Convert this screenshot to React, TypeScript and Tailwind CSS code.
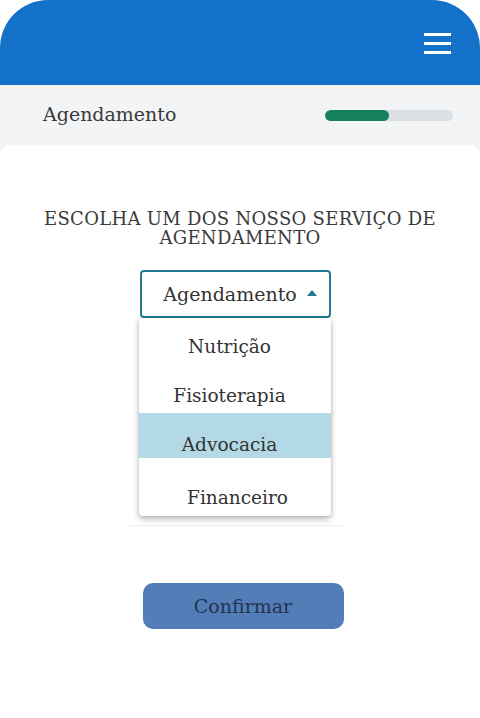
import React from "react";

const serif = { fontFamily: '"DejaVu Serif", "Liberation Serif", serif' };

export default function App() {
  return (
    <div className="w-[480px] h-[718px] bg-white overflow-hidden" style={serif}>
      <header className="h-[85px] bg-[#1471c9] rounded-t-[48px] flex items-center justify-end pr-[29px]">
        <div className="flex flex-col gap-[6px] pt-[1px]">
          <span className="block w-[27px] h-[3px] bg-white" />
          <span className="block w-[27px] h-[3px] bg-white" />
          <span className="block w-[27px] h-[3px] bg-white" />
        </div>
      </header>
      <div className="bg-[#f2f4f6]">
        <div className="h-[60px] flex items-center justify-between pl-[43px] pr-[27px]">
          <span className="text-[19px] text-[#3a3a3a] leading-none pb-[1px]">Agendamento</span>
          <div className="w-[128px] h-[11px] rounded-full bg-[#dadfe3] overflow-hidden">
            <div className="w-[64px] h-full rounded-full bg-[#15805e]" />
          </div>
        </div>
        <main className="bg-white rounded-t-[10px] h-[573px] flex flex-col items-center pt-[64px]">
          <h1 className="text-[18px] leading-[19px] text-[#3b3b3b] text-center uppercase tracking-[0.3px]">
            Escolha um dos nosso serviço de
            <br />
            agendamento
          </h1>
          <div className="mt-[23px] mr-[10px] w-[191px] h-[48px] border-2 border-[#237b93] rounded-[4px] flex items-center justify-center gap-[10px] pl-[10px]">
            <span className="text-[19px] text-[#333] leading-none">Agendamento</span>
            <svg width="10" height="6" viewBox="0 0 10 6" className="mt-[-3px]">
              <path d="M0 6 L5 0 L10 6 Z" fill="#237b93" />
            </svg>
          </div>
          <div className="mr-[10px] w-[213px] flex flex-col items-center border-b border-[#eeeeee]">
            <ul className="w-[192px] bg-white rounded-b-[4px] shadow-[0_3px_6px_rgba(0,0,0,0.28),0_0_3px_rgba(0,0,0,0.12)] text-[18.5px] leading-[20px] text-[#333] text-center mb-[9px]">
              <li className="h-[49px] pt-[19px] pr-[11px]">Nutrição</li>
              <li className="h-[46px] pt-[19px] pr-[11px]">Fisioterapia</li>
              <li className="h-[45px] pt-[22px] pr-[11px] bg-[#b3d8e6]">Advocacia</li>
              <li className="h-[58px] pt-[30px] pl-[5px]">Financeiro</li>
            </ul>
          </div>
          <button className="mt-[57px] ml-[6px] w-[201px] h-[46px] rounded-[10px] bg-[#527db7] text-[19px] text-[#24344f] flex items-center justify-center">
            Confirmar
          </button>
        </main>
      </div>
    </div>
  );
}
